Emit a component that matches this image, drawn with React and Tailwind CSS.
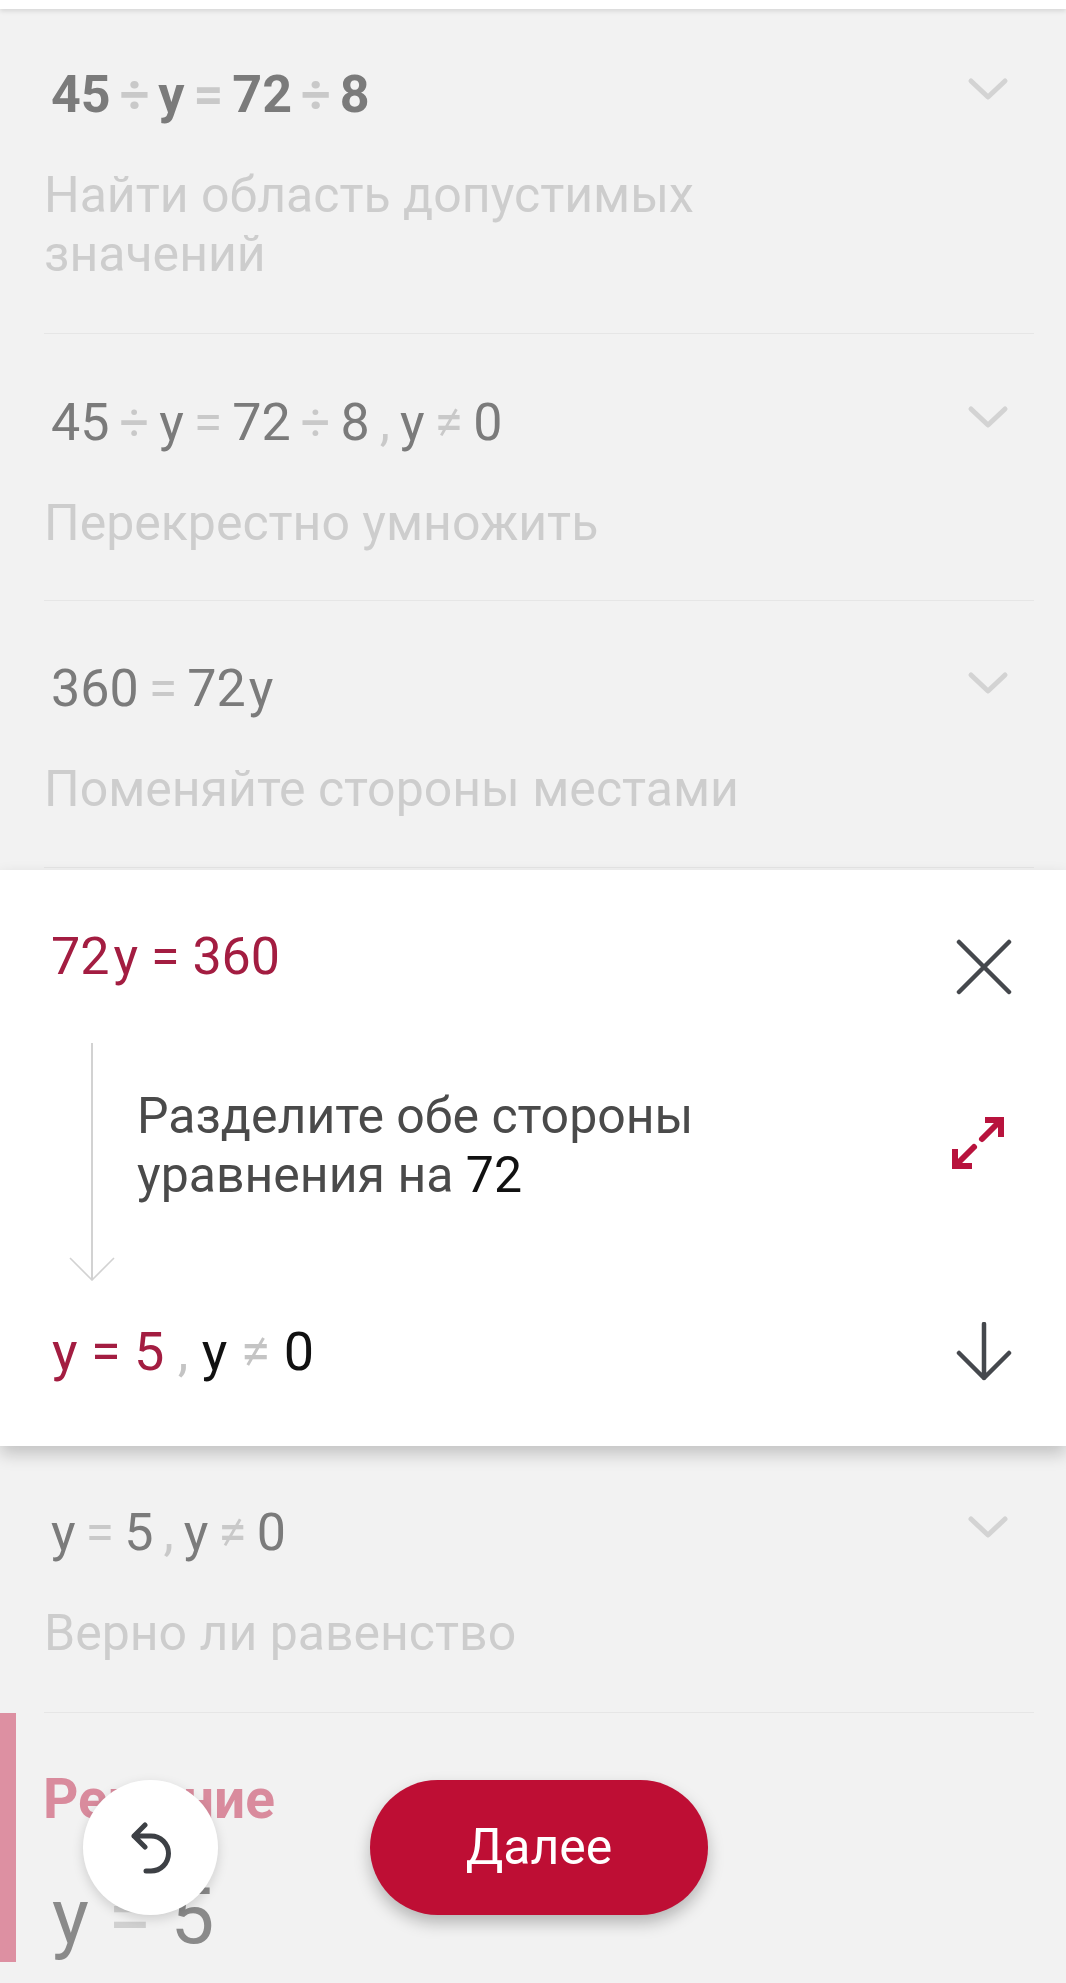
import React from 'react';

const NUM = 'text-[#7b7b7b]';
const OP = 'text-[#c9c9c9]';

// n = number / variable, o = operator (spaced with margins, narrower than a real space)
function Tokens({ parts, gap }) {
  return parts.map(([text, kind], i) => (
    <span key={i} className={kind === 'o' ? `${OP} ${gap}` : kind === 'v' ? `${NUM} ml-[3px]` : NUM}>
      {text}
    </span>
  ));
}

function Chevron() {
  return (
    <svg width="44" height="24" viewBox="0 0 44 24" className="mt-[12px] mr-[24px] shrink-0">
      <path d="M5 4 L22 20 L39 4" fill="none" stroke="#d3d3d3" strokeWidth="5" strokeLinecap="round" strokeLinejoin="round" />
    </svg>
  );
}

function Row({ eq, bold, desc, className }) {
  return (
    <div className={`ml-[44px] mr-[32px] border-b border-[#e6e6e6] ${className}`}>
      <div className="flex h-[60px] items-start justify-between">
        <div className={`pl-[7px] text-[52px] leading-[60px] ${bold ? 'font-bold' : ''}`}>
          <Tokens parts={eq} gap={bold ? 'mx-[9px]' : 'mx-[10px]'} />
        </div>
        <Chevron />
      </div>
      <p className="mt-[41px] max-w-[740px] text-[50px] leading-[59px] text-[#cdcdcd]">{desc}</p>
    </div>
  );
}

function CloseIcon() {
  return (
    <svg width="56" height="56" viewBox="0 0 56 56" className="mt-[12px] shrink-0">
      <path d="M3 3 L53 53 M53 3 L3 53" stroke="#45484d" strokeWidth="4.5" strokeLinecap="round" fill="none" />
    </svg>
  );
}

function StepArrow() {
  return (
    <svg width="46" height="238" viewBox="0 0 46 238" className="ml-[69px] shrink-0">
      <path d="M23 0 V236" stroke="#d2d2d2" strokeWidth="2" fill="none" />
      <path d="M1 215 L23 237 L45 215" stroke="#d2d2d2" strokeWidth="1.6" fill="none" />
    </svg>
  );
}

function ExpandIcon() {
  return (
    <svg width="66" height="66" viewBox="0 0 66 66" className="mt-[67px] ml-auto shrink-0">
      <g stroke="#b8133d" strokeWidth="6" fill="none" strokeLinejoin="miter">
        <path d="M40 10 H56 V27" />
        <path d="M55 11 L37 29" strokeLinecap="round" />
        <path d="M10 39 V56 H27" />
        <path d="M11 55 L29 37" strokeLinecap="round" />
      </g>
    </svg>
  );
}

function DownIcon() {
  return (
    <svg width="56" height="60" viewBox="0 0 56 60" className="shrink-0">
      <path d="M28 2 V56 M3 31 L28 56 L53 31" stroke="#45484d" strokeWidth="4.5" strokeLinecap="round" strokeLinejoin="round" fill="none" />
    </svg>
  );
}

function UndoIcon() {
  return (
    <svg width="40" height="60" viewBox="0 0 40 60">
      <path
        d="M14 7 L3 18 L14 29 M3 18 H20 A17.5 17.5 0 0 1 20 53 H15"
        stroke="#3d4045"
        strokeWidth="5"
        strokeLinecap="round"
        strokeLinejoin="round"
        fill="none"
      />
    </svg>
  );
}

export default function App() {
  return (
    <div className="relative h-[1983px] w-full overflow-hidden bg-[#f2f2f2] font-['Roboto',sans-serif]">
      {/* top bar */}
      <div className="relative z-10 h-[9px] bg-white shadow-[0_2px_5px_rgba(0,0,0,0.12)]" />

      <Row
        bold
        className="pt-[56px] pb-[49px]"
        eq={[['45', 'n'], ['÷', 'o'], ['y', 'n'], ['=', 'o'], ['72', 'n'], ['÷', 'o'], ['8', 'n']]}
        desc="Найти область допустимых значений"
      />
      <Row
        className="pt-[59px] pb-[47px]"
        eq={[['45', 'n'], ['÷', 'o'], ['y', 'n'], ['=', 'o'], ['72', 'n'], ['÷', 'o'], ['8', 'n'], [',', 'o'], ['y', 'n'], ['≠', 'o'], ['0', 'n']]}
        desc="Перекрестно умножить"
      />
      <Row
        className="pt-[58px] pb-[48px]"
        eq={[['360', 'n'], ['=', 'o'], ['72', 'n'], ['y', 'v']]}
        desc="Поменяйте стороны местами"
      />

      {/* expanded step */}
      <div className="relative z-10 mt-[2px] bg-white pt-[57px] pb-[64px] shadow-[0_8px_16px_rgba(0,0,0,0.2)]">
        <div className="flex h-[60px] items-start justify-between pl-[51px] pr-[54px]">
          <div className="text-[52px] leading-[60px] text-[#a31d41]">
            72<span className="ml-[4px]">y</span> = 360
          </div>
          <CloseIcon />
        </div>
        <div className="mt-[56px] flex items-start pr-[55px]">
          <StepArrow />
          <div className="ml-[22px] mt-[44px] text-[50px] leading-[59px] text-[#4a4a4a]">
            <p>Разделите обе стороны</p>
            <p>
              уравнения на <span className="text-[#111]">72</span>
            </p>
          </div>
          <ExpandIcon />
        </div>
        <div className="mt-[41px] flex h-[60px] items-start justify-between pl-[52px] pr-[54px]">
          <div className="text-[54px] leading-[60px] whitespace-pre">
            <span className="text-[#a31d41]">y = 5</span>
            <span className="text-[#c4c4c4]"> , </span>
            <span className="text-[#111]">y</span>
            <span className="text-[#c4c4c4]"> ≠ </span>
            <span className="text-[#111]">0</span>
          </div>
          <DownIcon />
        </div>
      </div>

      <Row
        className="pt-[57px] pb-[49px]"
        eq={[['y', 'n'], ['=', 'o'], ['5', 'n'], [',', 'o'], ['y', 'n'], ['≠', 'o'], ['0', 'n']]}
        desc="Верно ли равенство"
      />

      {/* solution */}
      <div className="border-l-[16px] border-[#dd90a2] pl-[27px] pt-[54px]">
        <div className="text-[55px] leading-[64px] font-bold text-[#d98b9d]">Решение</div>
        <div className="ml-[9px] mt-[41px] text-[78px] leading-[90px] text-[#8a8a8a]">
          y <span className="text-[#d0d0d0]">=</span> 5
        </div>
      </div>

      {/* floating actions */}
      <button className="absolute left-[83px] top-[1780px] flex h-[135px] w-[135px] items-center justify-center rounded-full bg-white shadow-[0_4px_12px_rgba(0,0,0,0.15)]">
        <UndoIcon />
      </button>
      <button className="absolute left-[370px] top-[1780px] flex h-[135px] w-[338px] items-center justify-center rounded-full bg-[#be0e34] text-[50px] font-normal text-white shadow-[0_8px_16px_rgba(0,0,0,0.25)]">
        Далее
      </button>
    </div>
  );
}
